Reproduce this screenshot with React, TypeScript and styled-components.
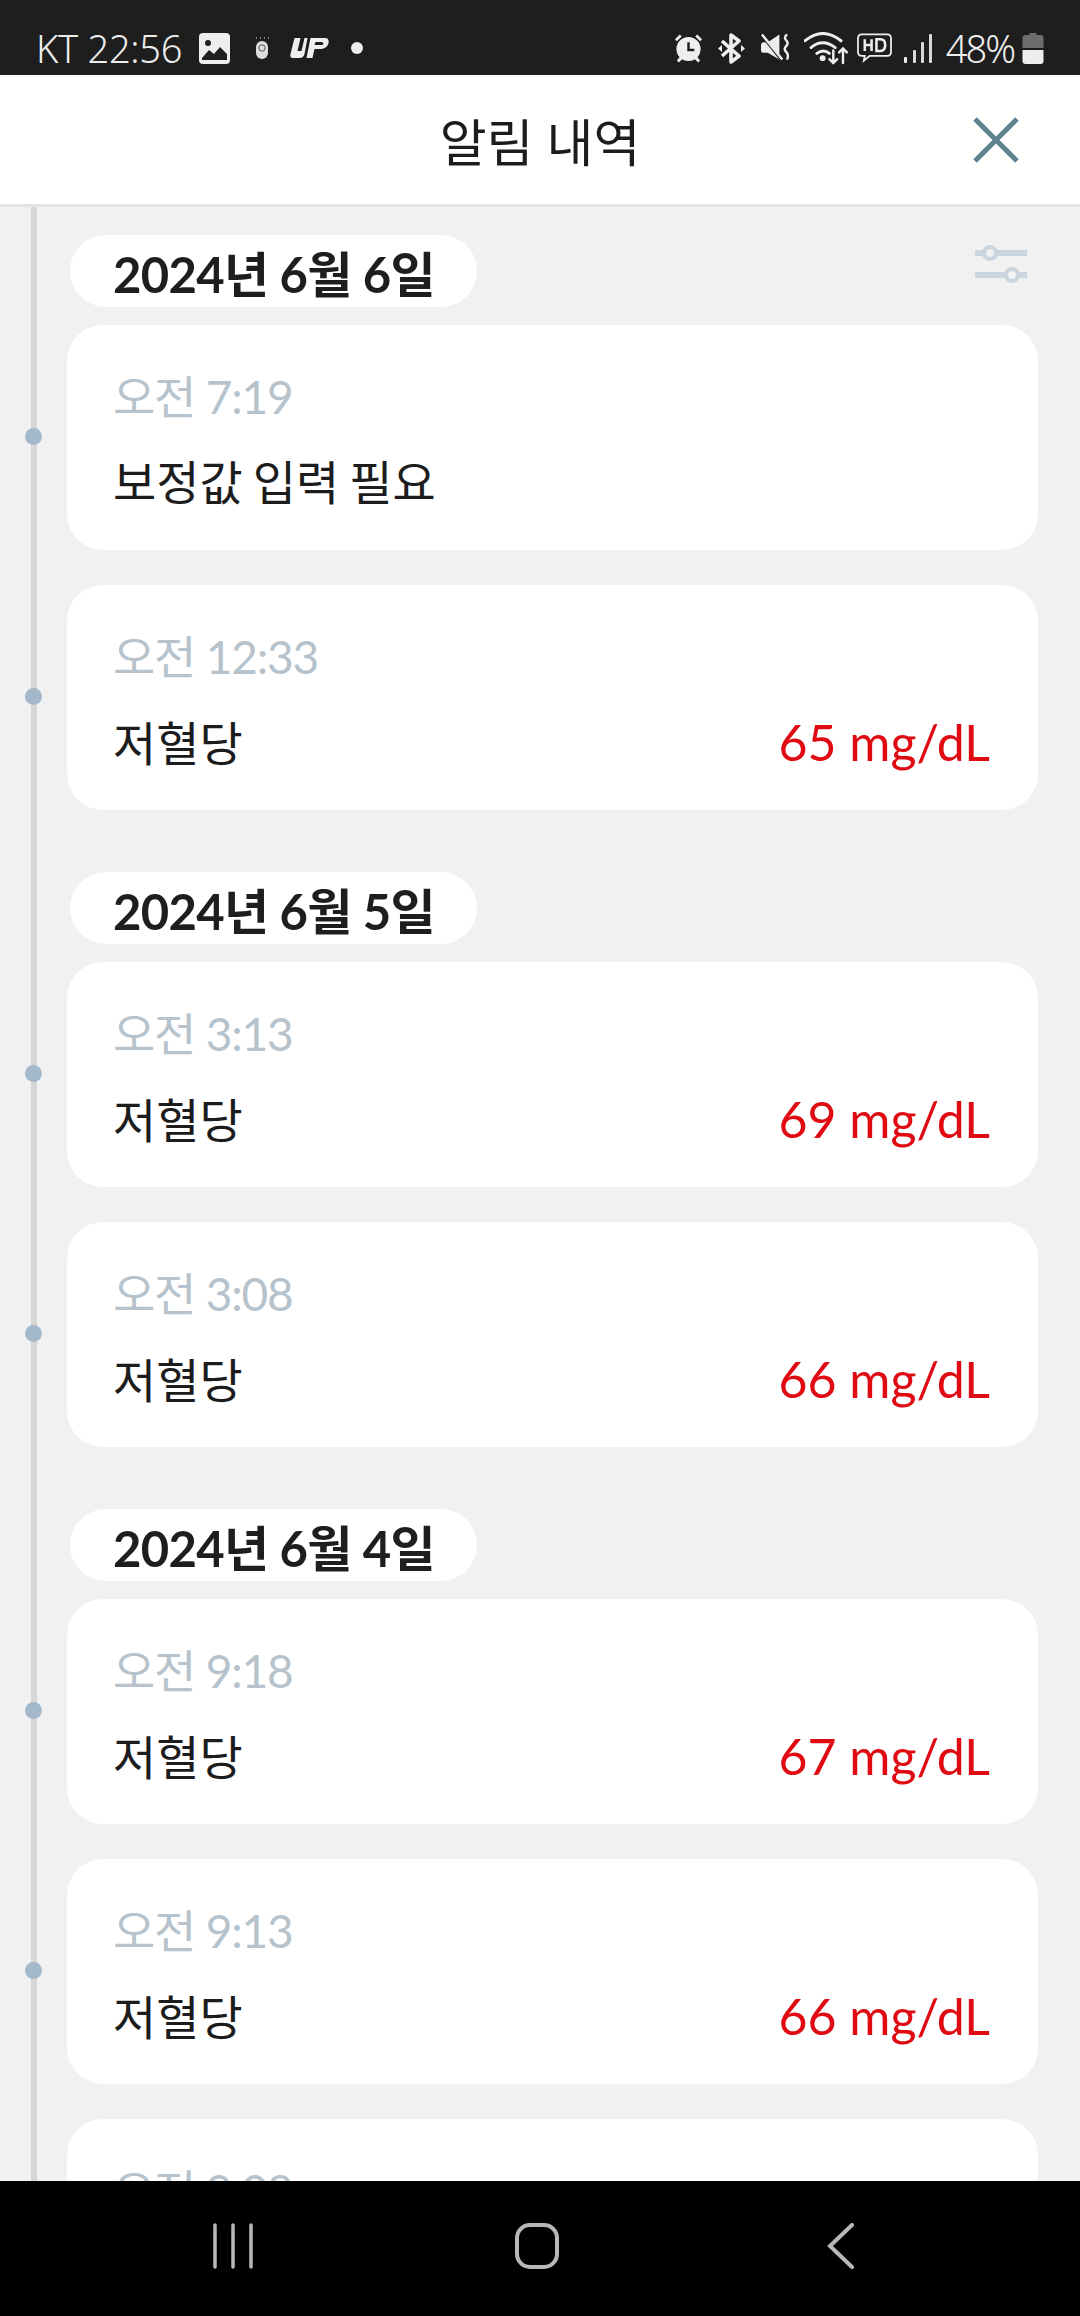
import React from 'react';
import styled, { createGlobalStyle } from 'styled-components';

const GlobalStyle = createGlobalStyle`
  html, body {
    margin: 0;
    padding: 0;
    background: #f1f1f1;
  }
  * {
    box-sizing: border-box;
  }
`;

const FONT = `Lato, "Noto Sans CJK KR", "Noto Sans", sans-serif`;

const Screen = styled.div`
  width: 1080px;
  height: 2316px;
  display: flex;
  flex-direction: column;
  overflow: hidden;
  font-family: ${FONT};
  background: #f1f1f1;
`;

const StatusBar = styled.div`
  height: 75px;
  flex: none;
  background: #1e1e1e;
  color: #eeeeee;
  display: flex;
  align-items: center;
  justify-content: space-between;
  padding: 21px 36px 0 36px;
`;

const StatusGroup = styled.div`
  display: flex;
  align-items: center;
`;

const StatusText = styled.span<{ $gap?: number; $tight?: boolean }>`
  margin-left: ${p => p.$gap ?? 0}px;
  font-family: "Noto Sans", sans-serif;
  font-weight: 300;
  font-size: 38px;
  line-height: 40px;
  letter-spacing: ${p => (p.$tight ? -2 : -0.3)}px;
  white-space: nowrap;
`;

const StatusIcon = styled.svg<{ $gap?: number }>`
  flex: none;
  margin-left: ${p => p.$gap ?? 0}px;
`;

const StatusDot = styled.span`
  width: 12px;
  height: 12px;
  margin-left: 22px;
  border-radius: 50%;
  background: #eee;
`;

const Header = styled.header`
  height: 132px;
  flex: none;
  background: #fff;
  border-bottom: 3px solid #e4e4e4;
  position: relative;
  display: flex;
  align-items: center;
  justify-content: center;
`;

const Title = styled.h1`
  margin: 0;
  font-size: 51px;
  font-weight: 400;
  color: #1c1c1c;
`;

const CloseButton = styled.button`
  position: absolute;
  right: 60px;
  top: 41px;
  width: 48px;
  height: 48px;
  padding: 0;
  border: none;
  background: none;
  display: flex;
`;

const Content = styled.main`
  flex: 1;
  position: relative;
  overflow: hidden;
  padding: 28px 42px 0 67px;
`;

const Timeline = styled.div`
  position: absolute;
  left: 31px;
  top: 0;
  bottom: 0;
  width: 6px;
  background: #d6d6d6;
`;

const FilterButton = styled.div`
  position: absolute;
  top: 37px;
  right: 53px;
  display: flex;
`;

const DateGroup = styled.section`
  display: flex;
  flex-direction: column;
  margin-bottom: 62px;
`;

const DatePill = styled.div`
  align-self: flex-start;
  height: 72px;
  margin-left: 3px;
  margin-bottom: 17.5px;
  padding: 0 42px 0 43px;
  border-radius: 36px;
  background: #fff;
  display: flex;
  align-items: center;
  font-size: 49px;
  font-weight: 700;
  color: #1e1e1e;
  letter-spacing: -0.7px;
  white-space: nowrap;
`;

const Card = styled.article`
  position: relative;
  height: 225.5px;
  padding: 44px 48px 0 46px;
  border-radius: 36px;
  background: #fff;
  & + & {
    margin-top: 34.5px;
  }
`;

const Dot = styled.span`
  position: absolute;
  left: -42px;
  top: 103px;
  width: 17px;
  height: 17px;
  border-radius: 50%;
  background: #a3b8ca;
`;

const Time = styled.div`
  font-size: 46px;
  line-height: 56px;
  letter-spacing: -1.2px;
  color: #b6c3cc;
`;

const Row = styled.div`
  margin-top: 29px;
  display: flex;
  justify-content: space-between;
  align-items: center;
  line-height: 56px;
`;

const Label = styled.span`
  font-size: 47px;
  word-spacing: -2px;
  color: #1c1c1c;
`;

const Value = styled.span`
  margin-bottom: 2px;
  font-size: 50px;
  color: #df0a12;
`;

const NavBar = styled.nav`
  height: 135px;
  flex: none;
  background: #000;
  position: relative;
  z-index: 1;
  display: grid;
  grid-template-columns: repeat(3, 304px);
  align-items: center;
  padding: 0 0 6px 81px;
`;

const NavItem = styled.div`
  display: flex;
  justify-content: center;
`;

type Entry = { time: string; label?: string; value?: string };

const groups: { date: string; entries: Entry[] }[] = [
  {
    date: '2024년 6월 6일',
    entries: [
      { time: '오전 7:19', label: '보정값 입력 필요' },
      { time: '오전 12:33', label: '저혈당', value: '65 mg/dL' },
    ],
  },
  {
    date: '2024년 6월 5일',
    entries: [
      { time: '오전 3:13', label: '저혈당', value: '69 mg/dL' },
      { time: '오전 3:08', label: '저혈당', value: '66 mg/dL' },
    ],
  },
  {
    date: '2024년 6월 4일',
    entries: [
      { time: '오전 9:18', label: '저혈당', value: '67 mg/dL' },
      { time: '오전 9:13', label: '저혈당', value: '66 mg/dL' },
      // only the top of this one shows above the nav bar
      { time: '오전 9:08' },
    ],
  },
];

const GalleryIcon = () => (
  <StatusIcon $gap={17} width="31" height="31" viewBox="0 0 31 31">
    <rect width="31" height="31" rx="4" fill="#eee" />
    <circle cx="9" cy="10" r="3" fill="#1e1e1e" />
    <path d="M3 25l7-8 5 4 6-7 7 7v6H3z" fill="#1e1e1e" />
  </StatusIcon>
);

const RemoteIcon = () => (
  <StatusIcon $gap={25} width="14" height="22" viewBox="0 0 14 22">
    <path d="M1 1h1M5 1h1M9 1h1M13 1h1" stroke="#aaa" strokeWidth="1.5" />
    <rect x="1" y="4" width="12" height="18" rx="6" fill="#ddd" />
    <circle cx="7" cy="11" r="3.200" fill="none" stroke="#555" strokeWidth="1" />
  </StatusIcon>
);

const UpIcon = () => (
  <StatusIcon $gap={21} width="39" height="20" viewBox="0 0 38 20">
    <path d="M4 0h6L7 13h4l3-13h3l-3 16q-1 4-5 4H3q-4 0-3-4z" fill="#eee" />
    <path d="M20 0h14q5 0 4 5t-7 6h-7l-2 9h-6zm5 4l-1 3h7q2 0 2-1.500t-2-1.500z" fill="#eee" fillRule="evenodd" />
  </StatusIcon>
);

const AlarmIcon = () => (
  <StatusIcon width="29" height="30" viewBox="0 0 30 30">
    <path d="M1 6l5-5 2 2-5 5zM29 6l-5-5-2 2 5 5z" fill="#eee" />
    <path d="M6 24l-3 4 2 2 4-4zM24 24l3 4-2 2-4-4z" fill="#eee" />
    <circle cx="15" cy="16" r="12.500" fill="#eee" />
    <path d="M15 9v8h6" fill="none" stroke="#1e1e1e" strokeWidth="2.500" />
  </StatusIcon>
);

const BluetoothIcon = () => (
  <StatusIcon $gap={15} width="27" height="31" viewBox="0 0 27 31">
    <path d="M4 8l17 15-8 6V2l8 6L4 23" fill="none" stroke="#eee" strokeWidth="3.600" strokeLinejoin="round" />
    <path d="M0 15.500l4-3.500v7zM27 15.500l-4-3.500v7z" fill="#eee" />
  </StatusIcon>
);

const MuteIcon = () => (
  <StatusIcon $gap={16} width="30" height="30" viewBox="0 0 31 30">
    <path d="M3 9h4L19 1v26L7 20H3q-3 0-3-3v-5q0-3 3-3z" fill="#eee" />
    <path d="M1 2l19 24" stroke="#1e1e1e" strokeWidth="3" />
    <path d="M1 1l21 26" stroke="#eee" strokeWidth="2.500" />
    <path d="M27 1q-4 3-1 6t0 6 0 6 1 8" fill="none" stroke="#eee" strokeWidth="2.500" />
  </StatusIcon>
);

const WifiIcon = () => (
  <StatusIcon $gap={13} width="45" height="33" viewBox="0 0 46 34">
    <g fill="none" stroke="#eee" strokeWidth="3" strokeLinecap="round">
      <path d="M1 9q18-15 37 0" />
      <path d="M7 16q12-10 25 0" />
      <path d="M13 22q7-5 13 0" />
      <path d="M30 19v13M26 28l4 4 4-4" strokeWidth="2.500" />
      <path d="M40 32V17M36 21l4-4 4 4" strokeWidth="2.500" />
    </g>
    <circle cx="19" cy="27" r="3" fill="#eee" />
  </StatusIcon>
);

const HdIcon = () => (
  <StatusIcon $gap={8} width="35" height="30" viewBox="0 0 36 30">
    <path d="M5 1h26q4 0 4 4v14q0 4-4 4H13l-6 5 1-5H5q-4 0-4-4V5q0-4 4-4z" fill="none" stroke="#eee" strokeWidth="1.800" />
    <path d="M8 6v12M15 6v12M8 12h7" stroke="#eee" strokeWidth="2.600" fill="none" />
    <path d="M20 6v12h4q5 0 5-6t-5-6z" stroke="#eee" strokeWidth="2.600" fill="none" />
  </StatusIcon>
);

const SignalIcon = () => (
  <StatusIcon $gap={12} width="28" height="29" viewBox="0 0 28 29">
    <rect x="0" y="23" width="3" height="6" rx="1" fill="#eee" />
    <rect x="9" y="16" width="3" height="13" rx="1" fill="#d8d8d8" />
    <rect x="17" y="8" width="3" height="21" rx="1" fill="#d8d8d8" />
    <rect x="25" y="0" width="3" height="29" rx="1" fill="#d8d8d8" />
  </StatusIcon>
);

const BatteryIcon = () => (
  <StatusIcon $gap={8} width="22" height="31" viewBox="0 0 21 31">
    <path d="M7 0h7v2h4q3 0 3 3v10H0V5q0-3 3-3h4z" fill="#6e6e6e" />
    <path d="M0 17h21v11q0 3-3 3H3q-3 0-3-3z" fill="#eee" />
  </StatusIcon>
);

const CloseIcon = () => (
  <svg width="48" height="48" viewBox="0 0 48 48">
    <path d="M3 3l42 42M45 3L3 45" stroke="#5f8291" strokeWidth="5" />
  </svg>
);

const FilterIcon = () => (
  <svg width="52" height="40" viewBox="0 0 52 40">
    <g stroke="#cbd5df" fill="none">
      <path d="M0 9h52M0 31h52" strokeWidth="6" />
      <circle cx="15" cy="9" r="6" fill="#f1f1f1" strokeWidth="4" />
      <circle cx="37" cy="31" r="6" fill="#f1f1f1" strokeWidth="4" />
    </g>
  </svg>
);

const RecentIcon = () => (
  <svg width="42" height="46" viewBox="0 0 42 46">
    <path d="M3 2v42M21 2v42M39 2v42" stroke="#b8b8b8" strokeWidth="3.500" strokeLinecap="round" />
  </svg>
);

const HomeIcon = () => (
  <svg width="44" height="46" viewBox="0 0 44 46">
    <rect x="2" y="2" width="40" height="42" rx="13" fill="none" stroke="#b8b8b8" strokeWidth="4" />
  </svg>
);

const BackIcon = () => (
  <svg width="28" height="46" viewBox="0 0 28 46">
    <path d="M25 2L3 23l22 21" fill="none" stroke="#b8b8b8" strokeWidth="4" strokeLinecap="round" />
  </svg>
);

const App: React.FC = () => {
  return (
    <Screen>
      <GlobalStyle />
      <StatusBar>
        <StatusGroup>
          <StatusText>KT 22:56</StatusText>
          <GalleryIcon />
          <RemoteIcon />
          <UpIcon />
          <StatusDot />
        </StatusGroup>
        <StatusGroup>
          <AlarmIcon />
          <BluetoothIcon />
          <MuteIcon />
          <WifiIcon />
          <HdIcon />
          <SignalIcon />
          <StatusText $gap={14} $tight>48%</StatusText>
          <BatteryIcon />
        </StatusGroup>
      </StatusBar>
      <Header>
        <Title>알림 내역</Title>
        <CloseButton>
          <CloseIcon />
        </CloseButton>
      </Header>
      <Content>
        <Timeline />
        <FilterButton>
          <FilterIcon />
        </FilterButton>
        {groups.map(group => (
          <DateGroup key={group.date}>
            <DatePill>{group.date}</DatePill>
            {group.entries.map(entry => (
              <Card key={entry.time}>
                <Dot />
                <Time>{entry.time}</Time>
                {entry.label && (
                  <Row>
                    <Label>{entry.label}</Label>
                    {entry.value && <Value>{entry.value}</Value>}
                  </Row>
                )}
              </Card>
            ))}
          </DateGroup>
        ))}
      </Content>
      <NavBar>
        <NavItem>
          <RecentIcon />
        </NavItem>
        <NavItem>
          <HomeIcon />
        </NavItem>
        <NavItem>
          <BackIcon />
        </NavItem>
      </NavBar>
    </Screen>
  );
};

export default App;
